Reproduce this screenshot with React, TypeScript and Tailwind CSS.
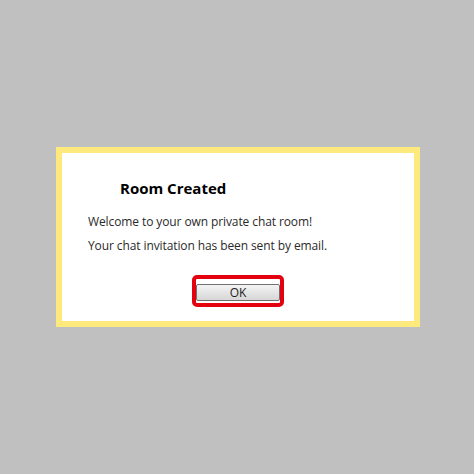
export default function App() {
  return (
    <div className="flex h-[474px] w-[474px] items-start justify-center bg-[#c0c0c0] pt-[147px] pl-[2px]">
      <div className="w-[364px] h-[180px] border-[6px] border-[#fde97c] bg-white font-['Open_Sans',sans-serif] text-[#1a1a1a]">
        <div className="pl-[58px] pt-[25px] text-[15px] font-bold leading-[20px] text-black">
          Room Created
        </div>
        <div className="mt-[15px] pl-[26px] text-[12px] leading-[17px] tracking-[-0.1px] text-[#2a2a2a]">
          <p>Welcome to your own private chat room!</p>
          <p className="mt-[7px]">Your chat invitation has been sent by email.</p>
        </div>
        <div className="mt-[21px] flex justify-center">
          <div className="rounded-[5px] border-[4px] border-[#e3000f]">
            <button className="h-[17px] w-[84px] rounded-[2px] border border-[#707070] bg-gradient-to-b from-[#f4f4f4] to-[#d6d6d6] text-[12px] leading-[15px] text-[#222]">
              OK
            </button>
          </div>
        </div>
      </div>
    </div>
  );
}
